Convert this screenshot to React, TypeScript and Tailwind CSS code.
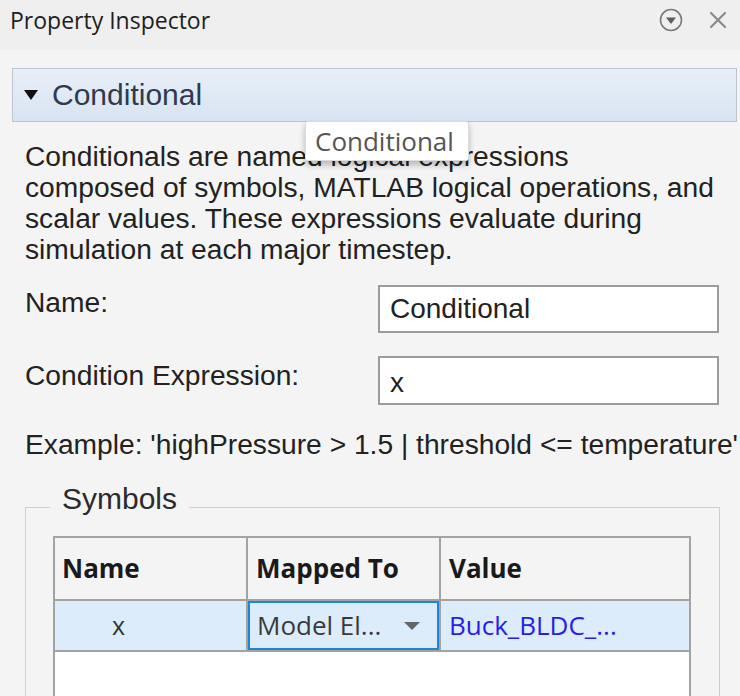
import React from "react";

const arial = { fontFamily: "'Liberation Sans', Arial, sans-serif" };
const segoe = { fontFamily: "'Open Sans', 'Noto Sans', sans-serif" };

export default function App() {
  return (
    <div className="relative w-[740px] h-[696px] overflow-hidden bg-[#f4f4f4] text-[#222]" style={arial}>
      {/* Header */}
      <div className="h-[50px] bg-[#efefef] flex items-start justify-between pl-[10px] pr-[10px] pt-[5px]">
        <span className="text-[23px] leading-[30px] text-[#1e1e1e]" style={segoe}>
          Property Inspector
        </span>
        <div className="flex items-center gap-[26px] pt-[3px]">
          <svg width="24" height="24" viewBox="0 0 24 24">
            <circle cx="12" cy="12" r="10.5" fill="none" stroke="#7a7a7a" strokeWidth="1.6" />
            <path d="M7 9.5 L17 9.5 L12 16 Z" fill="#5f5f5f" />
          </svg>
          <svg width="18" height="18" viewBox="0 0 18 18" className="mr-[3px]">
            <path d="M2 2 L16 16 M16 2 L2 16" stroke="#8a8a8a" strokeWidth="2.2" strokeLinecap="round" />
          </svg>
        </div>
      </div>

      {/* Body */}
      <div className="pt-[18px] pl-[12px] pr-[3px]">
        <div className="h-[54px] border border-[#bcc5cf] bg-gradient-to-b from-[#e8eff8] to-[#d8e4f2] flex items-center pl-[11px]">
          <svg width="14" height="10" viewBox="0 0 14 10" className="mr-[14px]">
            <path d="M0 0 L14 0 L7 10 Z" fill="#111" />
          </svg>
          <span className="text-[30px] text-[#2d3b4c] leading-none">Conditional</span>
        </div>

        <div className="pl-[13px] pr-[18px]">
          <p className="mt-[19px] text-[28.2px] leading-[31px] text-[#222] whitespace-nowrap">
            Conditionals are named logical expressions
            <br />
            composed of symbols, MATLAB logical operations, and
            <br />
            scalar values. These expressions evaluate during
            <br />
            simulation at each major timestep.
          </p>

          <div className="mt-[20px] flex items-start">
            <div className="flex-1 text-[28.2px] leading-[31px] pt-[2px]">Name:</div>
            <div className="w-[341px] h-[48px] border-2 border-[#9c9c9c] bg-white flex items-center pl-[10px] text-[28px]">
              Conditional
            </div>
          </div>

          <div className="mt-[23px] flex items-start">
            <div className="flex-1 text-[28.2px] leading-[31px] pt-[4px]">Condition Expression:</div>
            <div className="w-[341px] h-[49px] border-2 border-[#9c9c9c] bg-white flex items-center pl-[10px] text-[28px] pt-[4px]">
              x
            </div>
          </div>

          <div className="mt-[24px] text-[28.2px] leading-[31px] whitespace-nowrap">
            Example: 'highPressure &gt; 1.5 | threshold &lt;= temperature'
          </div>

          <fieldset className="mt-[30px] border border-[#cfcfcf] pl-[27px] pr-[28px] pt-[12px] pb-[20px] mr-[3px]">
            <legend className="-ml-[3px] px-[12px] text-[30px] leading-[18px] pb-[16px] text-[#2b2b2b]">
              Symbols
            </legend>
            <table className="w-[636px] border-collapse table-fixed" style={segoe}>
              <colgroup>
                <col className="w-[193px]" />
                <col className="w-[193px]" />
                <col className="w-[250px]" />
              </colgroup>
              <thead>
                <tr className="h-[63px] bg-[#f4f4f4]">
                  <th className="border-2 border-[#a3a3a3] text-left pl-[7px] text-[26px] font-bold text-[#1a1a1a]">Name</th>
                  <th className="border-2 border-[#a3a3a3] text-left pl-[8px] text-[26px] font-bold text-[#1a1a1a]">Mapped To</th>
                  <th className="border-2 border-[#a3a3a3] text-left pl-[8px] text-[26px] font-bold text-[#1a1a1a]">Value</th>
                </tr>
              </thead>
              <tbody>
                <tr className="h-[51px] bg-[#dcecfb]">
                  <td className="border-2 border-[#a3a3a3] pl-[57px] text-[25px] text-[#333]">x</td>
                  <td className="border-2 border-[#a3a3a3] p-0">
                    <div className="h-[49px] border-2 border-[#1c85d8] flex items-center pl-[7px] pr-[17px] justify-between">
                      <span className="text-[26px] text-[#3a3a3a]">Model El...</span>
                      <svg width="16" height="8" viewBox="0 0 16 8">
                        <path d="M0 0 L16 0 L8 8 Z" fill="#666" />
                      </svg>
                    </div>
                  </td>
                  <td className="border-2 border-[#a3a3a3] pl-[8px] text-[26px] text-[#2a1de8]">Buck_BLDC_...</td>
                </tr>
                <tr className="h-[120px] bg-white">
                  <td className="border-2 border-[#a3a3a3]" colSpan={3}></td>
                </tr>
              </tbody>
            </table>
          </fieldset>
        </div>
      </div>

      {/* Tooltip */}
      <div
        className="absolute left-[305px] top-[121px] w-[164px] h-[40px] bg-white border border-[#dcdcdc] rounded-[3px] shadow-[0_4px_6px_rgba(0,0,0,0.25)] flex items-center pl-[9px] text-[26px] text-[#555]"
        style={segoe}
      >
        Conditional
      </div>
    </div>
  );
}
